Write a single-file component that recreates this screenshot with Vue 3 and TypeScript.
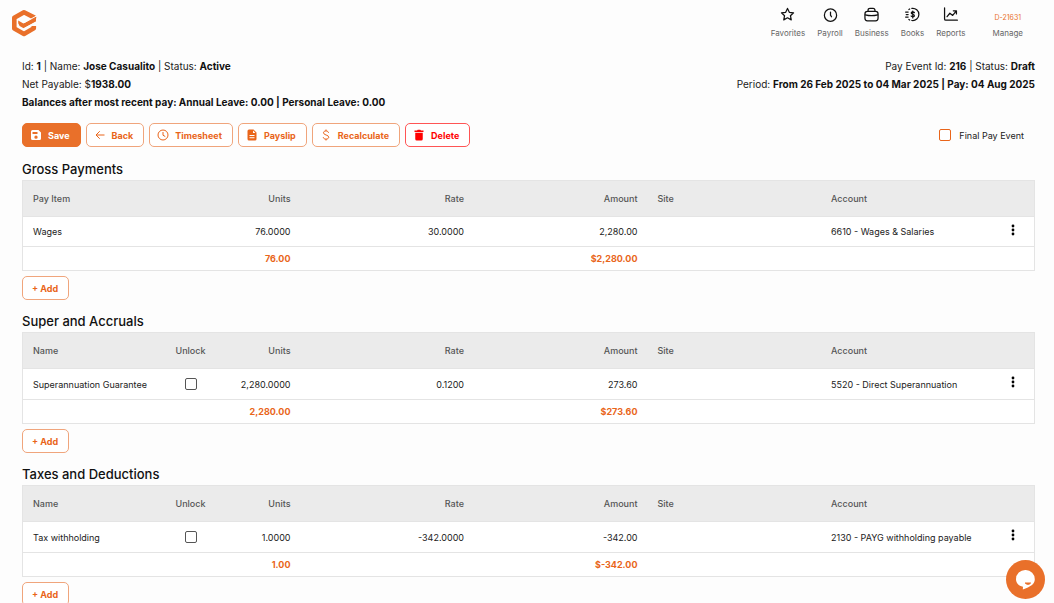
<script setup lang="ts">
import { ref } from 'vue'

interface PayLine {
  name: string
  units: string
  rate: string
  amount: string
  site: string
  account: string
}

interface PaySection {
  id: string
  title: string
  nameLabel: string
  lockable: boolean
  lines: PayLine[]
  totalUnits: string
  totalAmount: string
}

const navItems = [
  { icon: 'star', label: 'Favorites' },
  { icon: 'clock', label: 'Payroll' },
  { icon: 'briefcase', label: 'Business' },
  { icon: 'coin', label: 'Books' },
  { icon: 'chart', label: 'Reports' },
]

const actions = [
  { icon: 'save', label: 'Save', kind: 'primary' },
  { icon: 'back', label: 'Back', kind: 'outline' },
  { icon: 'time', label: 'Timesheet', kind: 'outline' },
  { icon: 'doc', label: 'Payslip', kind: 'outline' },
  { icon: 'dollar', label: 'Recalculate', kind: 'outline' },
  { icon: 'trash', label: 'Delete', kind: 'danger' },
]

const sections: PaySection[] = [
  {
    id: 'gross',
    title: 'Gross Payments',
    nameLabel: 'Pay Item',
    lockable: false,
    lines: [
      { name: 'Wages', units: '76.0000', rate: '30.0000', amount: '2,280.00', site: '', account: '6610 - Wages & Salaries' },
    ],
    totalUnits: '76.00',
    totalAmount: '$2,280.00',
  },
  {
    id: 'super',
    title: 'Super and Accruals',
    nameLabel: 'Name',
    lockable: true,
    lines: [
      { name: 'Superannuation Guarantee', units: '2,280.0000', rate: '0.1200', amount: '273.60', site: '', account: '5520 - Direct Superannuation' },
    ],
    totalUnits: '2,280.00',
    totalAmount: '$273.60',
  },
  {
    id: 'taxes',
    title: 'Taxes and Deductions',
    nameLabel: 'Name',
    lockable: true,
    lines: [
      { name: 'Tax withholding', units: '1.0000', rate: '-342.0000', amount: '-342.00', site: '', account: '2130 - PAYG withholding payable' },
    ],
    totalUnits: '1.00',
    totalAmount: '$-342.00',
  },
]

const finalPay = ref(false)
</script>

<template>
  <div class="app">
    <header class="topbar">
      <a class="logo" href="#" aria-label="Home">
        <svg viewBox="0 0 26 28" width="26" height="28">
          <path d="M23 9.300V8.400L13 3.200 3.300 8.800v10.600L13 24.900l9.800-5.600v-2.400" fill="none" stroke="#e9702a" stroke-width="4.600" stroke-linejoin="round" />
          <path d="M7.200 11.400l5.200 3L25 7.600v5.100L12.600 19.200l-4-2.300-1.400-2.600z" fill="#e9702a" />
          <path d="M11.600 20.700l13.600-7.500" stroke="#fdfdfd" stroke-width="1.500" />
          <path d="M13 13.800L25.600 6.900" stroke="#fdfdfd" stroke-width="1" />
        </svg>
      </a>
      <nav class="nav">
        <a v-for="item in navItems" :key="item.label" href="#" class="nav-item">
          <svg class="nav-icon" viewBox="0 0 24 24">
            <path v-if="item.icon === 'star'" d="M12 2.300l2.900 6.200 6.800.8-5 4.600 1.300 6.700-6-3.300-6 3.300 1.300-6.700-5-4.600 6.800-.8z" />
            <g v-else-if="item.icon === 'clock'"><circle cx="12" cy="13" r="9.800" /><path d="M12 8v5l1.600 2.600" /></g>
            <g v-else-if="item.icon === 'briefcase'"><rect x="1.500" y="7" width="21" height="15" rx="4" /><path d="M6.500 7V5A3 3 0 0 1 9.500 2h5a3 3 0 0 1 3 3v2M2 12.500c6 1.600 14 1.600 20 0" /></g>
            <g v-else-if="item.icon === 'coin'"><path d="M11 2.200a9.800 9.800 0 1 1 0 19.400M7.500 3.200L6.200 4M1 8h4M2 12h3M1 16h4M7.500 20.800L6.200 20" /><path d="M15 9c-.8-1.400-5-1.600-5 .6 0 2.700 5 1.300 5 4.200 0 2.200-4.200 2.200-5.200.6M12.400 6.500v11" /></g>
            <path v-else d="M2.500 1.500v17.500a2 2 0 0 0 2 2H23M6.500 15.500l4.500-5.500 4.500 3.500L21 6.500M16.500 6h5v5" />
          </svg>
          <span>{{ item.label }}</span>
        </a>
        <a href="#" class="nav-item manage">
          <span class="code">D-21631</span>
          <span>Manage</span>
        </a>
      </nav>
    </header>

    <main class="content">
      <div class="summary">
        <div>
          <p>Id: <b>1</b> | Name: <b>Jose Casualito</b> | Status: <b>Active</b></p>
          <p>Net Payable: $<b>1938.00</b></p>
          <p><b>Balances after most recent pay: Annual Leave: 0.00 | Personal Leave: 0.00</b></p>
        </div>
        <div class="event">
          <p>Pay Event Id: <b>216</b> | Status: <b>Draft</b></p>
          <p>Period: <b>From 26 Feb 2025 to 04 Mar 2025 | Pay: 04 Aug 2025</b></p>
        </div>
      </div>

      <div class="toolbar">
        <button v-for="action in actions" :key="action.label" type="button" class="btn" :class="action.kind">
          <svg class="btn-icon" viewBox="0 0 24 24">
            <path v-if="action.icon === 'save'" fill="currentColor" fill-rule="evenodd" d="M5 2h12l5 5v12a3 3 0 0 1-3 3H5a3 3 0 0 1-3-3V5a3 3 0 0 1 3-3zm0 4v4h10V6zm7 7a3.300 3.300 0 1 0 0 6.600 3.300 3.300 0 0 0 0-6.600z" />
            <path v-else-if="action.icon === 'back'" class="line" d="M21 12H4M11.500 4.500L4 12l7.500 7.500" />
            <g v-else-if="action.icon === 'time'" class="line"><circle cx="12" cy="12" r="10" /><path d="M12 6v6.500l4.500 2.500" /></g>
            <path v-else-if="action.icon === 'doc'" fill="currentColor" fill-rule="evenodd" d="M6 1h9l6 6v13a3 3 0 0 1-3 3H6a3 3 0 0 1-3-3V4a3 3 0 0 1 3-3zm8 2v5h5zM7 12v2h10v-2zm0 4.500v2h10v-2z" />
            <path v-else-if="action.icon === 'dollar'" class="line" d="M17 8c0-5.500-10-5.500-10-.5 0 5.500 10.500 3.500 10.500 9 0 5-11 5-11 0M12 1v3M12 20v3" />
            <path v-else fill="currentColor" d="M3 3h5l1.500-1.500h5L16 3h5v3H3zM4.500 7.500h15V20a3 3 0 0 1-3 3h-9a3 3 0 0 1-3-3z" />
          </svg>
          <span>{{ action.label }}</span>
        </button>
        <label class="final">
          <input v-model="finalPay" type="checkbox" class="check accent" />
          <span>Final Pay Event</span>
        </label>
      </div>

      <section v-for="section in sections" :key="section.id" class="section">
        <h2>{{ section.title }}</h2>
        <table>
          <colgroup>
            <col :class="section.lockable ? 'col-name' : 'col-item'" />
            <col v-if="section.lockable" class="col-lock" />
            <col class="col-units" />
            <col />
            <col />
            <col />
            <col />
            <col class="col-menu" />
          </colgroup>
          <thead>
            <tr>
              <th scope="col">{{ section.nameLabel }}</th>
              <th v-if="section.lockable" scope="col" class="mid">Unlock</th>
              <th scope="col" class="num">Units</th>
              <th scope="col" class="num">Rate</th>
              <th scope="col" class="num">Amount</th>
              <th scope="col">Site</th>
              <th scope="col">Account</th>
              <th></th>
            </tr>
          </thead>
          <tbody>
            <tr v-for="line in section.lines" :key="line.name" :class="{ tall: section.lockable }">
              <td>{{ line.name }}</td>
              <td v-if="section.lockable" class="mid">
                <input type="checkbox" class="check" :aria-label="`Unlock ${line.name}`" />
              </td>
              <td class="num">{{ line.units }}</td>
              <td class="num">{{ line.rate }}</td>
              <td class="num">{{ line.amount }}</td>
              <td>{{ line.site }}</td>
              <td>{{ line.account }}</td>
              <td class="menu-cell">
                <button type="button" class="menu" :aria-label="`Options for ${line.name}`">
                  <svg viewBox="0 0 4 12" width="4" height="12">
                    <circle cx="2" cy="2" r="1.400" /><circle cx="2" cy="6" r="1.400" /><circle cx="2" cy="10" r="1.400" />
                  </svg>
                </button>
              </td>
            </tr>
          </tbody>
          <tfoot>
            <tr>
              <td :colspan="section.lockable ? 2 : 1"></td>
              <td class="num">{{ section.totalUnits }}</td>
              <td></td>
              <td class="num">{{ section.totalAmount }}</td>
              <td colspan="3"></td>
            </tr>
          </tfoot>
        </table>
        <button type="button" class="btn outline add">+ Add</button>
      </section>
    </main>

    <button type="button" class="chat" aria-label="Open chat">
      <svg viewBox="0 0 39 39" width="39" height="39">
        <path d="M19.500 10a9 9 0 0 1 9.300 9.300c0 4.700-4.300 7.700-12 10.200l.2-2.700C12.500 26 10 23 10 19.300A9.200 9.200 0 0 1 19.500 10z" fill="#fff" />
        <path d="M19.200 23c1.500 1.800 4.300 1.800 5.400 0z" fill="#e9702a" stroke="#e9702a" stroke-linejoin="round" />
      </svg>
    </button>
  </div>
</template>

<style>
body {
  margin: 0;
  background: #fdfdfd;
}
</style>

<style scoped>
.app {
  height: 100vh;
  overflow: auto;
  scrollbar-width: none;
  background: #fdfdfd;
  color: #212121;
  font-family: Inter, "Liberation Sans", sans-serif;
  font-size: 9px;
}

.topbar {
  display: flex;
  justify-content: space-between;
  align-items: flex-start;
  height: 57px;
  padding: 0 31px 0 11px;
  box-sizing: border-box;
}

.logo {
  display: flex;
  margin-top: 9px;
}

.nav {
  display: flex;
  gap: 12px;
  padding-top: 7px;
}

.nav-item {
  display: flex;
  flex-direction: column;
  align-items: center;
  justify-content: space-between;
  height: 32px;
  color: #666;
  font-size: 8px;
  line-height: 12px;
  text-decoration: none;
}

.nav-icon {
  width: 15px;
  height: 15px;
  fill: none;
  stroke: #111;
  stroke-width: 2;
  stroke-linejoin: round;
  stroke-linecap: round;
}

.manage {
  margin-left: 15px;
}

.code {
  padding-top: 5px;
  color: #e9702a;
  font-size: 7px;
}

.content {
  padding: 0 19px 12px 22px;
}

.summary {
  display: flex;
  justify-content: space-between;
  font-size: 10px;
  line-height: 18px;
}

.summary p {
  margin: 0;
}

.summary b {
  color: #111;
  font-weight: 700;
}

.event {
  text-align: right;
}

.toolbar {
  display: flex;
  align-items: center;
  gap: 5px;
  margin: 12px 0 13px;
}

.btn {
  display: inline-flex;
  align-items: center;
  gap: 6px;
  height: 24px;
  padding: 0 10px 0 7px;
  box-sizing: border-box;
  border: 1px solid #f0a57c;
  border-radius: 5px;
  background: #fff;
  color: #e9651a;
  font: 700 9px Inter, "Liberation Sans", sans-serif;
}

.btn.primary {
  border-color: #e9702a;
  background: #e9702a;
  color: #fff;
}

.btn.danger {
  border-color: #f55;
  color: #f00;
}

.btn-icon {
  width: 12px;
  height: 12px;
}

.line {
  fill: none;
  stroke: currentColor;
  stroke-width: 2;
}

.final {
  display: flex;
  align-items: center;
  gap: 8px;
  margin-left: auto;
  padding-right: 11px;
}

.check {
  appearance: none;
  width: 12px;
  height: 12px;
  margin: 0;
  border: 1px solid #555;
  border-radius: 2px;
  background: #fff;
  vertical-align: middle;
}

.check.accent {
  border-color: #e9651a;
}

.check:checked {
  background: #e9702a;
}

.section {
  margin-bottom: 12px;
}

h2 {
  margin: 0 0 2px;
  color: #111;
  font-size: 13px;
  font-weight: 500;
  line-height: 18px;
}

table {
  width: 100%;
  table-layout: fixed;
  border-collapse: collapse;
  border: 1px solid #e4e4e4;
  background: #fff;
}

.col-item {
  width: 194px;
}

.col-name {
  width: 142px;
}

.col-lock {
  width: 52px;
}

.col-units {
  width: 84px;
}

.col-menu {
  width: 40px;
}

tr {
  height: 30px;
  border-bottom: 1px solid #e4e4e4;
}

tr.tall {
  height: 31px;
}

thead tr {
  height: 36px;
  background: #ebebeb;
}

tfoot tr {
  height: 24px;
}

th,
td {
  padding: 0 10px;
  text-align: left;
  font-weight: 400;
  white-space: nowrap;
}

th {
  color: #555;
  font-weight: 500;
}

.num {
  text-align: right;
}

.mid {
  padding: 0;
  text-align: center;
}

tfoot td {
  color: #e9651a;
  font-weight: 700;
}

.menu-cell {
  padding: 0 2px 4px 0;
  text-align: center;
}

.menu {
  padding: 0 6px;
  border: 0;
  background: none;
  vertical-align: middle;
}

.menu svg {
  display: block;
}

.add {
  margin-top: 5px;
  padding-left: 9px;
}

.chat {
  position: fixed;
  right: 9px;
  bottom: 4px;
  width: 39px;
  height: 39px;
  padding: 0;
  border: 0;
  border-radius: 50%;
  background: #e9702a;
}

.chat svg {
  display: block;
}
</style>
